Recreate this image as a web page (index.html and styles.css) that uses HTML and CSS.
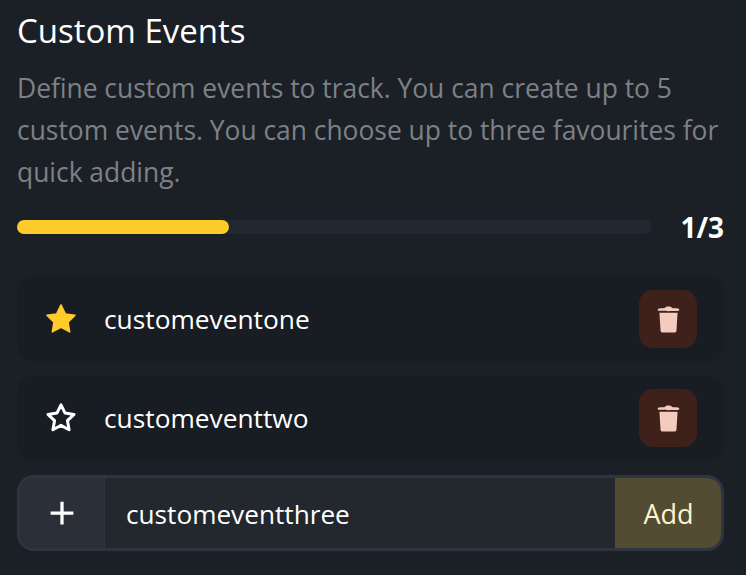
FILE: index.html
```html
<!DOCTYPE html>
<html lang="en">
<head>
  <meta charset="UTF-8">
  <meta name="viewport" content="width=device-width, initial-scale=1.0">
  <title>Custom Events</title>
  <link rel="stylesheet" href="styles.css">
</head>
<body>
  <h1 class="title">Custom Events</h1>
  <p class="desc">Define custom events to track. You can create up to 5 custom events. You can choose up to three favourites for quick adding.</p>

  <div class="progress-row">
    <div class="progress">
      <div class="progress-fill" style="width: 33.4%"></div>
    </div>
    <span class="progress-label">1/3</span>
  </div>

  <div class="event">
    <svg class="star" viewBox="0 0 24 24"><path class="star-full" d="M12 2.6l2.900 6 6.500.9-4.700 4.600 1.100 6.500-5.800-3.100-5.800 3.100 1.100-6.500-4.700-4.600 6.500-.9z"/></svg>
    <span class="event-name">customeventone</span>
    <button class="delete">
      <svg viewBox="0 0 24 24"><path d="M9.500 3.600c0-.6 1-1 2.500-1s2.500.4 2.500 1c2.200.1 4.500.3 5 .6.400.2.400 1.300 0 1.500-.5.300-14.500.300-15 0-.4-.2-.4-1.300 0-1.500.5-.3 2.800-.5 5-.6z"/><path d="M5.400 7h13.200l-.8 13c-.1 1-.7 1.500-1.600 1.500H7.800c-.9 0-1.500-.5-1.600-1.500z"/></svg>
    </button>
  </div>

  <div class="event">
    <svg class="star" viewBox="0 0 24 24"><path class="star-empty" d="M12 3.200l2.700 5.500 6 .9-4.400 4.200 1.100 6-5.400-2.900-5.400 2.900 1.100-6-4.400-4.200 6-.9z"/></svg>
    <span class="event-name">customeventtwo</span>
    <button class="delete">
      <svg viewBox="0 0 24 24"><path d="M9.500 3.600c0-.6 1-1 2.500-1s2.500.4 2.500 1c2.200.1 4.500.3 5 .6.400.2.400 1.300 0 1.500-.5.300-14.500.300-15 0-.4-.2-.4-1.300 0-1.500.5-.3 2.800-.5 5-.6z"/><path d="M5.400 7h13.200l-.8 13c-.1 1-.7 1.500-1.600 1.500H7.800c-.9 0-1.500-.5-1.600-1.500z"/></svg>
    </button>
  </div>

  <div class="add-group">
    <div class="add-icon">
      <svg viewBox="0 0 24 24"><path d="M12 1.500v21M1.500 12h21"/></svg>
    </div>
    <input class="add-input" type="text" value="customeventthree">
    <button class="add-btn">Add</button>
  </div>
</body>
</html>
```

FILE: styles.css
```css
* {
  box-sizing: border-box;
}
body {
  font-family: "Open Sans", "Noto Sans", sans-serif;
  background-color: #1b2027;
  color: #fff;
  margin: 0;
  padding: 11px 22px 0 17px;
}
.title {
  font-size: 33px;
  font-weight: 400;
  line-height: 40px;
  margin: 0 0 16px;
}
.desc {
  color: #7d8185;
  font-size: 26.400px;
  line-height: 42px;
  margin: 0 0 21px;
}
.progress-row {
  display: flex;
  align-items: center;
  justify-content: space-between;
  height: 26px;
  margin-bottom: 36px;
}
.progress {
  width: 635px;
  height: 14px;
  border-radius: 7px;
  background-color: #222831;
}
.progress-fill {
  height: 100%;
  border-radius: 7px;
  background-color: #ffca2c;
}
.progress-label {
  font-size: 28px;
  font-weight: 700;
}
.event {
  display: flex;
  align-items: center;
  height: 86px;
  margin-bottom: 13px;
  padding: 0 27px 0 26px;
  border-radius: 17px;
  background-color: #181c23;
}
.star {
  width: 36px;
  height: 36px;
  flex-shrink: 0;
}
.star-full {
  fill: #ffca2c;
  stroke: #ffca2c;
  stroke-width: 1;
  stroke-linejoin: round;
}
.star-empty {
  fill: none;
  stroke: #fff;
  stroke-width: 2;
  stroke-linejoin: round;
}
.event-name {
  flex: 1;
  margin-left: 25px;
  font-size: 26.300px;
}
.delete {
  display: flex;
  align-items: center;
  justify-content: center;
  width: 58px;
  height: 58px;
  padding: 0;
  border: none;
  border-radius: 14px;
  background-color: #3f211c;
}
.delete svg {
  width: 33px;
  height: 33px;
  fill: #f4cbbf;
}
.add-group {
  display: flex;
  height: 76px;
  margin-top: 14px;
  border: 3px solid #2f3540;
  border-radius: 17px;
  overflow: hidden;
}
.add-icon {
  display: flex;
  align-items: center;
  justify-content: center;
  width: 84px;
  background-color: #2b3038;
}
.add-icon svg {
  width: 26px;
  height: 26px;
  fill: none;
  stroke: #fff;
  stroke-width: 3;
}
.add-input {
  flex: 1;
  min-width: 0;
  padding: 1px 21px 0;
  border: none;
  border-left: 1px solid #2f3540;
  background-color: #22282e;
  color: #fff;
  font-family: inherit;
  font-size: 26.200px;
}
.add-btn {
  width: 106px;
  padding: 1px 0 0 1px;
  border: none;
  background-color: #524c33;
  color: #fff3cd;
  font-family: inherit;
  font-size: 27px;
}
```
